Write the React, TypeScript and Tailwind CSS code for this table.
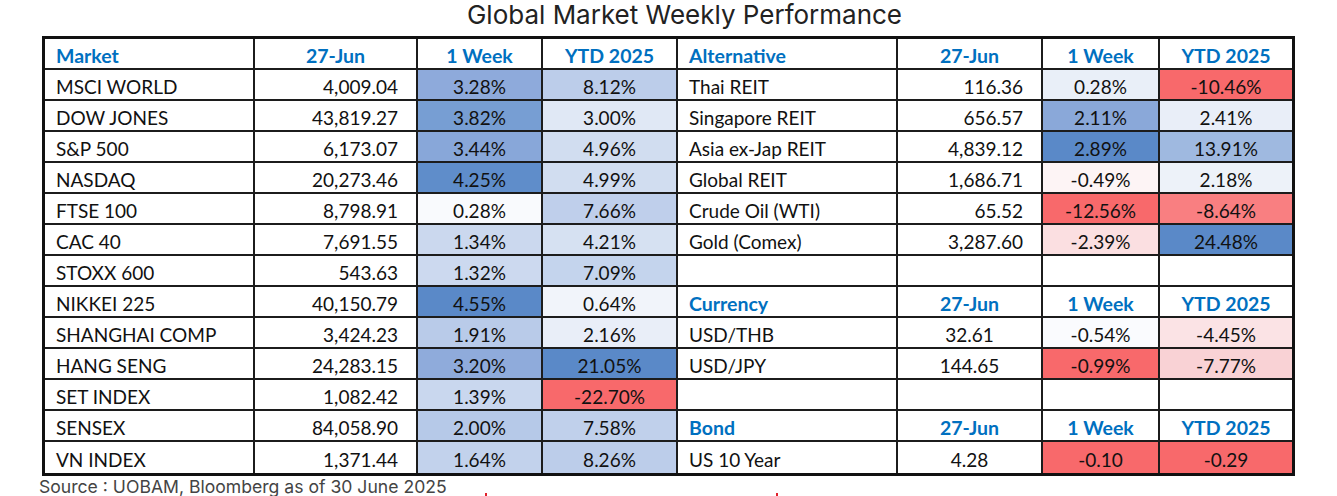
import React from 'react';

type Align = 'l' | 'r' | 'c';

interface Cell {
  t: string;
  a: Align;
  bg?: string;
  head?: boolean;
}

const L = (t: string, bg?: string): Cell => ({ t, a: 'l', bg });
const R = (t: string, bg?: string): Cell => ({ t, a: 'r', bg });
const C = (t: string, bg?: string): Cell => ({ t, a: 'c', bg });
const H = (t: string, a: Align): Cell => ({ t, a, head: true });

const headLeft: Cell[] = [H('Market', 'l'), H('27-Jun', 'c'), H('1 Week', 'c'), H('YTD 2025', 'c')];
const subHead = (name: string): Cell[] => [H(name, 'l'), H('27-Jun', 'c'), H('1 Week', 'c'), H('YTD 2025', 'c')];
const empty: Cell[] = [L(''), L(''), L(''), L('')];

// left block: world equity indices
const markets: Cell[][] = [
  headLeft,
  [L('MSCI WORLD'), R('4,009.04'), C('3.28%', 'bg-[#8eaadb]'), C('8.12%', 'bg-[#bccdea]')],
  [L('DOW JONES'), R('43,819.27'), C('3.82%', 'bg-[#779ed3]'), C('3.00%', 'bg-[#e0e8f5]')],
  [L('S&P 500'), R('6,173.07'), C('3.44%', 'bg-[#88a7d9]'), C('4.96%', 'bg-[#d1ddf0]')],
  [L('NASDAQ'), R('20,273.46'), C('4.25%', 'bg-[#5f8dca]'), C('4.99%', 'bg-[#d1ddf0]')],
  [L('FTSE 100'), R('8,798.91'), C('0.28%', 'bg-[#f9fafd]'), C('7.66%', 'bg-[#bfcfeb]')],
  [L('CAC 40'), R('7,691.55'), C('1.34%', 'bg-[#cbd8ee]'), C('4.21%', 'bg-[#d6e1f2]')],
  [L('STOXX 600'), R('543.63'), C('1.32%', 'bg-[#ccd9ef]'), C('7.09%', 'bg-[#c4d4ed]')],
  [L('NIKKEI 225'), R('40,150.79'), C('4.55%', 'bg-[#5a89c8]'), C('0.64%', 'bg-[#f1f4fa]')],
  [L('SHANGHAI COMP'), R('3,424.23'), C('1.91%', 'bg-[#b9cbe9]'), C('2.16%', 'bg-[#e9eef8]')],
  [L('HANG SENG'), R('24,283.15'), C('3.20%', 'bg-[#8fabdb]'), C('21.05%', 'bg-[#5a89c8]')],
  [L('SET INDEX'), R('1,082.42'), C('1.39%', 'bg-[#c9d7ee]'), C('-22.70%', 'bg-[#f8696b]')],
  [L('SENSEX'), R('84,058.90'), C('2.00%', 'bg-[#b6c9e8]'), C('7.58%', 'bg-[#c0d0eb]')],
  [L('VN INDEX'), R('1,371.44'), C('1.64%', 'bg-[#c2d2ec]'), C('8.26%', 'bg-[#bccdea]')],
];

// right block: alternatives, currency, bond
const others: Cell[][] = [
  subHead('Alternative'),
  [L('Thai REIT'), R('116.36'), C('0.28%', 'bg-[#e9eff8]'), C('-10.46%', 'bg-[#f8696b]')],
  [L('Singapore REIT'), R('656.57'), C('2.11%', 'bg-[#8aa8d9]'), C('2.41%', 'bg-[#e9eef8]')],
  [L('Asia ex-Jap REIT'), R('4,839.12'), C('2.89%', 'bg-[#5a89c8]'), C('13.91%', 'bg-[#9fb9e0]')],
  [L('Global REIT'), R('1,686.71'), C('-0.49%', 'bg-[#fdf4f5]'), C('2.18%', 'bg-[#edf2f9]')],
  [L('Crude Oil (WTI)'), R('65.52'), C('-12.56%', 'bg-[#f8696b]'), C('-8.64%', 'bg-[#f97f81]')],
  [L('Gold (Comex)'), R('3,287.60'), C('-2.39%', 'bg-[#fbdfe1]'), C('24.48%', 'bg-[#5a89c8]')],
  empty,
  subHead('Currency'),
  [L('USD/THB'), C('32.61'), C('-0.54%', 'bg-[#fafbfe]'), C('-4.45%', 'bg-[#fbe3e5]')],
  [L('USD/JPY'), C('144.65'), C('-0.99%', 'bg-[#f8696b]'), C('-7.77%', 'bg-[#f9d2d5]')],
  empty,
  subHead('Bond'),
  [L('US 10 Year'), C('4.28'), C('-0.10', 'bg-[#f8696b]'), C('-0.29', 'bg-[#f8696b]')],
];

const rows = markets.map((r, i) => [...r, ...others[i]]);

function TableCell({ cell, lastCol, lastRow }: { cell: Cell; lastCol: boolean; lastRow: boolean }) {
  const align =
    cell.a === 'l' ? 'justify-start pl-[11px]' : cell.a === 'r' ? 'justify-end pr-[18px]' : 'justify-center';
  const borders = lastCol
    ? lastRow
      ? ''
      : 'border-b-2'
    : lastRow
      ? 'border-r-2'
      : 'border-r-2 border-b-2';
  return (
    <div
      className={`flex h-[31px] items-center pt-[4px] border-[#1c1c1c] ${borders} ${align} ${cell.bg ?? 'bg-white'} ${
        cell.head ? 'font-bold text-[19.5px] text-[#0070c0]' : 'text-[19px] text-[#111]'
      }`}
    >
      {cell.t}
    </div>
  );
}

export default function App() {
  return (
    <div className="w-[1337px] h-[496px] overflow-hidden bg-white font-['Lato','Liberation_Sans',sans-serif]">
      <div className="h-[36px] pl-[32px] text-center text-[26px] leading-[30px] text-[#222] font-['Inter','Noto_Sans',sans-serif]">
        Global Market Weekly Performance
      </div>
      <div className="px-[42px]">
        <div className="grid grid-cols-[210px_163px_125px_135px_220px_145px_117px_132px] border-[3px] border-[#111] leading-none">
          {rows.map((row, ri) =>
            row.map((cell, ci) => (
              <TableCell
                key={`${ri}-${ci}`}
                cell={cell}
                lastCol={ci === row.length - 1}
                lastRow={ri === rows.length - 1}
              />
            )),
          )}
        </div>
      </div>
      <div className="flex items-end pl-[39px] pt-[1px] font-['Inter','Noto_Sans',sans-serif] text-[17.6px] leading-[20px] text-[#444]">
        <span className="w-[409px] whitespace-nowrap">Source : UOBAM, Bloomberg as of 30 June 2025</span>
        <span className="ml-[37px] h-[4px] w-[2px] bg-[#e0202a]" />
        <span className="ml-[289px] h-[4px] w-[2px] bg-[#e0202a]" />
      </div>
    </div>
  );
}
